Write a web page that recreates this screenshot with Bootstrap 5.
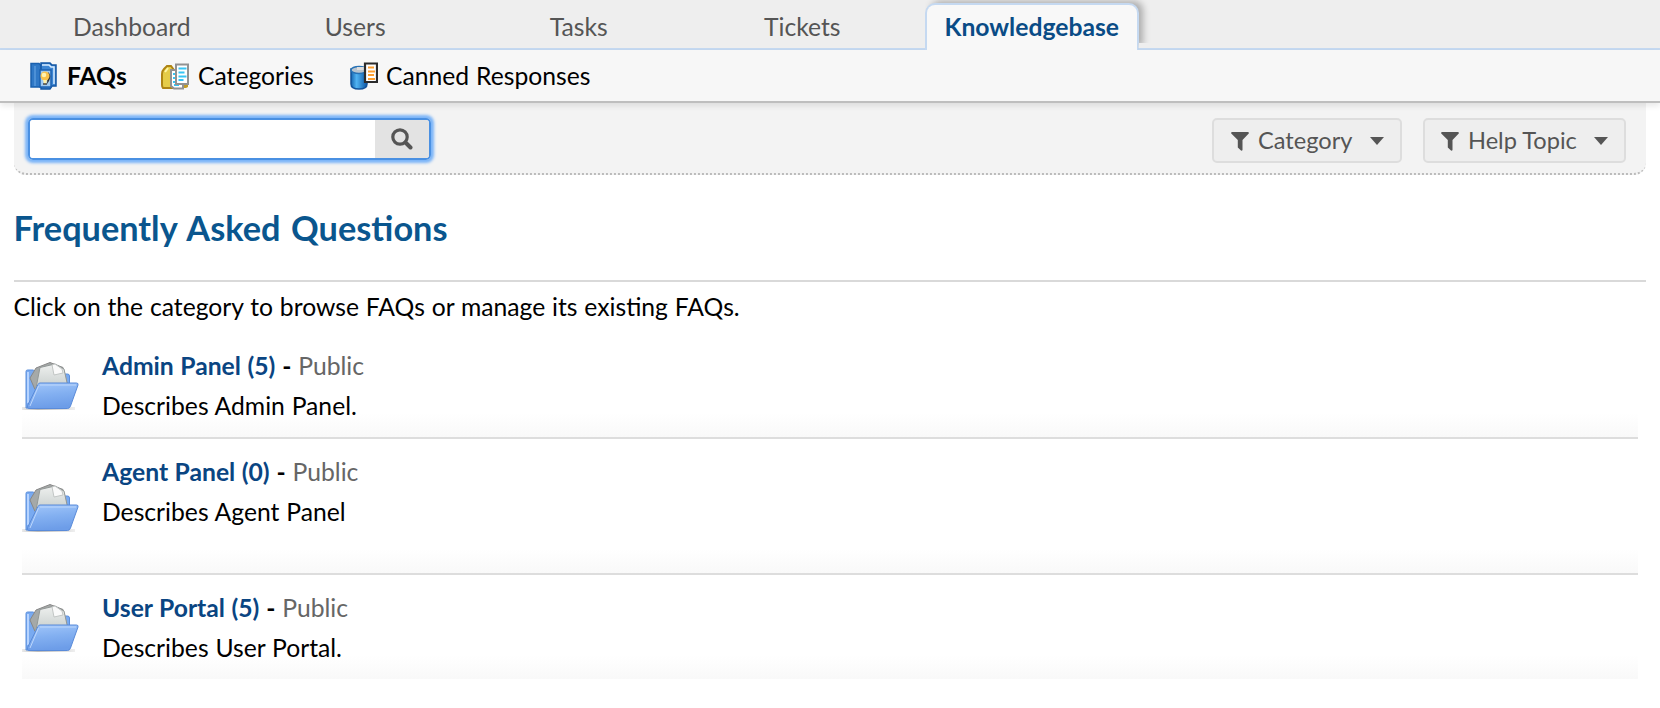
<!DOCTYPE html>
<html lang="en">
<head>
<meta charset="utf-8">
<title>Knowledgebase</title>
<link href="https://cdn.jsdelivr.net/npm/bootstrap@5.3.0/dist/css/bootstrap.min.css" rel="stylesheet">
<style>
body{font-family:Lato,sans-serif;font-size:24.7px;word-spacing:.5px;line-height:40px;color:#000;background:#fff;overflow:hidden}
.main-tabs{height:50px;background:#eee;border-bottom:2px solid #c5d9f1;padding-left:25px}
.main-tabs .nav-item{width:213.5px;margin-right:10px}
.main-tabs .nav-item:last-child{margin-left:6px;margin-right:0}
.main-tabs .nav-link{height:47px;margin-top:3px;padding:0;color:#555;text-align:center;border:2px solid transparent;border-bottom:0;border-radius:10px 10px 0 0;line-height:43px}
.main-tabs .nav-link.active{background:#f8f8f8;border-color:#c5d9f1;color:#0a4c86;font-weight:700;box-shadow:5px -3px 7px -1px rgba(0,0,0,.28);clip-path:polygon(0 -10px,calc(100% + 16px) -10px,calc(100% + 16px) 40px,100% 40px,100% 47px,0 47px);height:47px;position:relative;z-index:2}
.sub-tabs{height:53px;background:#f7f7f7;border-bottom:2px solid #bebebe;box-shadow:0 3px 6px rgba(0,0,0,.09);position:relative;z-index:1;padding-left:30px}
.sub-tabs .nav-link{padding:0;color:#000;line-height:52px}
.toolbar{height:72px;margin:0 14px;padding:0 20px 0 14px;background:#f3f3f3;border-bottom:2px dotted #bbb;border-radius:0 0 12px 12px}
.search-box{width:403px;height:42px;border:2px solid #4a90e2;border-radius:5px;box-shadow:0 0 3px 3px #7ab4f8;margin-top:1px}
.search-box .form-control{border:0;border-radius:3px 0 0 3px;box-shadow:none;padding:0 8px}
.search-box .btn{width:54px;padding:0;background:#e3e3e3;border:0;border-radius:0 3px 3px 0;line-height:0}
.filter-btn{height:45px;padding:2px 16px 0 17px;color:#555;background:#eee;border:2px solid #ddd;border-radius:5px;font-size:23.6px;line-height:1}
.page-title{font-size:34.3px;word-spacing:2.3px;font-weight:700;color:#0a568e;line-height:50px;margin:28px 0 0 -.5px;height:79px;border-bottom:2px solid #d9d9d9}
.intro{height:57px;padding-top:5px;margin-left:-.5px}
.faq-row{border-bottom:2px solid #ddd;background:linear-gradient(#fff calc(100% - 24px),#f9f9f9);padding-top:7px}
.faq-row+.faq-row{padding-top:13px}
.faq-row:last-child{border:0}
.faq-row a{color:#0a4582;font-weight:700;text-decoration:none}
.faq-row .state{color:#666}
.folder{width:57px;height:50px;margin-right:23px;flex:none}
</style>
</head>
<body>
<svg width="0" height="0" class="position-absolute">
<defs>
<linearGradient id="blue" x1="0" y1="0" x2=".2" y2="1"><stop stop-color="#a1c6fa"/><stop offset=".5" stop-color="#83b0f1"/><stop offset="1" stop-color="#6d9de8"/></linearGradient>
<linearGradient id="paper" x1="0" y1="0" x2="0" y2="1"><stop stop-color="#eef0ef"/><stop offset="1" stop-color="#c9cfcd"/></linearGradient>
<linearGradient id="floor"><stop stop-color="#777" stop-opacity=".15"/><stop offset=".3" stop-color="#777" stop-opacity=".5"/><stop offset="1" stop-color="#777" stop-opacity=".12"/></linearGradient>
<linearGradient id="can"><stop stop-color="#1565b0"/><stop offset=".35" stop-color="#51b3f2"/><stop offset="1" stop-color="#0b56a5"/></linearGradient>
<symbol id="folder" viewBox="0 0 57 50">
<path d="M0 46h53v3H0z" fill="url(#floor)"/>
<path d="M4 47V10.500q0-1.500 1.500-1.500h6l4 4h30q2 0 2 2v20L42 47z" fill="#79aaf0" stroke="#5b8edb"/>
<path d="M6 42V11" stroke="#b7d4ff" stroke-width="2"/>
<path d="M8 17 14 7 28 1.500l13 5 5 20-33 2z" fill="#a5a9a8" stroke="#888"/>
<path d="M14 27 18 6.500 33 3l9 5L46 26z" fill="url(#paper)" stroke="#929897"/>
<path d="M30 4 32 14l9-2-1-4-7-5z" fill="#fafafa" stroke="#c2c6c5"/>
<path d="M16 23.500q.5-1.500 2-1.500h36.500q2 0 1.500 2L48.500 45q-.8 2.500-3 2.500H7q-2.500 0-1.500-3z" fill="url(#blue)" stroke="#5a8bd9"/>
<path d="M18 24h36M16.500 25 8 45" stroke="#bdd7fc" fill="none"/>
</symbol>
<symbol id="funnel" viewBox="0 0 18 19"><path d="M.8 0h16.400q1.200.7.300 1.800L11.500 8v10q-.5 1-1.500.5L6.800 15.500V8L.5 1.800Q-.4.700.8 0z" fill="#555"/></symbol>
</defs>
</svg>

<ul class="nav main-tabs flex-nowrap">
<li class="nav-item"><a class="nav-link" href="#">Dashboard</a></li>
<li class="nav-item"><a class="nav-link" href="#">Users</a></li>
<li class="nav-item"><a class="nav-link" href="#">Tasks</a></li>
<li class="nav-item"><a class="nav-link" href="#">Tickets</a></li>
<li class="nav-item"><a class="nav-link active" href="#">Knowledgebase</a></li>
</ul>

<nav class="nav sub-tabs flex-nowrap">
<a class="nav-link d-flex align-items-center fw-bold" href="#" style="width:131px">
<svg width="28" height="28" viewBox="0 0 28 28" style="margin-right:9px"><path d="M1 1.500h8l2 2h8V25H1z" fill="#2f78c6" stroke="#1a60ae" stroke-width="1.500"/><path d="M11 1h9l2 2h4v21h-4l-2 3h-9z" fill="#3d86d3" stroke="#1457a4" stroke-width="1.500"/><path d="M12 3h7l2 2h3v17" stroke="#d9edff" stroke-width="1.500" fill="none"/><path d="M5 4v20" stroke="#6ba8e6"/><path d="M10 8h11v17H10z" fill="#9fc9f2" stroke="#1c61b1" stroke-width="1.500"/><path d="M18 10q4 3 1 9l-2 3z" fill="#333"/><circle cx="15" cy="14" r="4.500" fill="#f9c24a"/><circle cx="14" cy="13" r="2.300" fill="#fff3b0"/><path d="M13 18h4l-1 4h-2z" fill="#fff0a8"/><path d="M13 22h4" stroke="#444" stroke-width="1.500"/></svg><span>FAQs</span></a>
<a class="nav-link d-flex align-items-center" href="#" style="width:189px">
<svg width="28" height="28" viewBox="0 0 28 28" style="margin-right:9px"><path d="M1 12Q1 9 3 7l3-3h4l3 4v18H2q-1-1-1-3z" fill="#e5cc48" stroke="#ae8414" stroke-width="2"/><path d="M4 10 7 6" stroke="#fff6a3" stroke-width="2"/><path d="M17 22h10v3l-2 1h-8z" fill="#c29c25"/><path d="M10 8h12v18.500H13L10 24z" fill="#fff" stroke="#929292" stroke-width="2"/><path d="M12 12h6M12 16h6M12 20h6M13 23h5" stroke="#37c5f5" stroke-width="2"/><path d="M15 2.500h12V22H15z" fill="#fff" stroke="#929292" stroke-width="2"/><path d="M17.500 6.500h8M17.500 10.500h6M17.500 14.500h8M17.500 18h5" stroke="#37c5f5" stroke-width="2"/></svg><span>Categories</span></a>
<a class="nav-link d-flex align-items-center" href="#">
<svg width="28" height="28" viewBox="0 0 28 28" style="margin-right:8px"><path d="M1 7v15q0 5 8 5t8-5V7z" fill="url(#can)" stroke="#13539b" stroke-width="1.500"/><ellipse cx="9" cy="8" rx="8" ry="3.500" fill="#b8c4cf" stroke="#2872b5" stroke-width="1.500"/><path d="M7 5h7v3H7z" fill="#ddd"/><path d="M15 1.500h12V20H15z" fill="#fff" stroke="#2b2b2b" stroke-width="2.200"/><path d="M18 5.500h6M18 9.500h7M18 13h6M18 17h7" stroke="#ff9f30" stroke-width="2"/></svg><span>Canned Responses</span></a>
</nav>

<div class="toolbar d-flex align-items-center justify-content-between">
<div class="search-box input-group flex-nowrap">
<input class="form-control" type="text" aria-label="Search"><button class="btn" type="button" aria-label="Search"><svg width="22" height="24" viewBox="0 0 22 22" fill="none" stroke="#555"><circle cx="9" cy="9" r="7.200" stroke-width="3.200"/><path d="m14.500 14.500 5 5" stroke-width="4" stroke-linecap="round"/></svg></button>
</div>
<div class="d-flex pt-1">
<button class="btn filter-btn d-flex align-items-center" style="width:190px;margin-right:21px"><svg width="18" height="19"><use href="#funnel"/></svg><span style="margin-left:9px">Category</span><svg class="ms-auto" width="14" height="8" viewBox="0 0 14 8"><path d="M0 0h14L7 8z" fill="#555"/></svg></button>
<button class="btn filter-btn d-flex align-items-center ps-3" style="width:203px"><svg width="18" height="19"><use href="#funnel"/></svg><span style="margin-left:9px">Help Topic</span><svg class="ms-auto" width="14" height="8" viewBox="0 0 14 8"><path d="M0 0h14L7 8z" fill="#555"/></svg></button>
</div>
</div>

<main style="margin:0 14px">
<h2 class="page-title">Frequently Asked Questions</h2>
<div class="intro">Click on the category to browse FAQs or manage its existing FAQs.</div>
<div class="mx-2">
<div class="faq-row d-flex" style="height:100px"><svg class="folder" style="margin-top:15px"><use href="#folder"/></svg><div><div><a href="#">Admin Panel (5)</a> <b>-</b> <span class="state">Public</span></div><div>Describes Admin Panel.</div></div></div>
<div class="faq-row d-flex" style="height:136px"><svg class="folder" style="margin-top:31px"><use href="#folder"/></svg><div><div><a href="#">Agent Panel (0)</a> <b>-</b> <span class="state">Public</span></div><div>Describes Agent Panel</div></div></div>
<div class="faq-row d-flex" style="height:104px"><svg class="folder" style="margin-top:15px"><use href="#folder"/></svg><div><div><a href="#">User Portal (5)</a> <b>-</b> <span class="state">Public</span></div><div>Describes User Portal.</div></div></div>
</div>
</main>
<script src="https://cdn.jsdelivr.net/npm/bootstrap@5.3.0/dist/js/bootstrap.bundle.min.js"></script>
</body>
</html>
